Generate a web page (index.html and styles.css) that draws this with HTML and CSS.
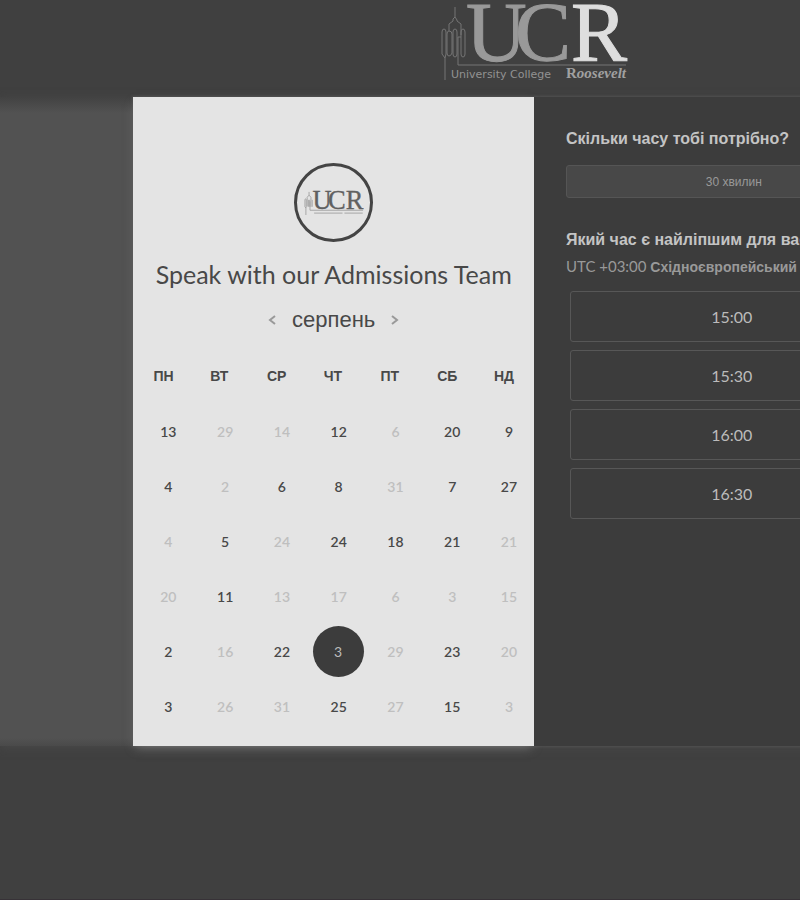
FILE: index.html
```html
<!DOCTYPE html>
<html lang="uk">
<head>
<meta charset="utf-8">
<title>Speak with our Admissions Team</title>
<link rel="stylesheet" href="styles.css">
</head>
<body>
<div class="page">
  <header class="top">
    <svg class="logo" viewBox="0 0 190 82" role="img" aria-label="UCR University College Roosevelt">
      <path class="tower" d="M6 79V57L3 53V31q0-3 2-3t2 3v22l-1 4M16 6v10l-2 2v2l-4 3v7M16 16l2 3v1l4 3v11M10 30q-2 0-2 3v19q0 3 2 3t3-3V33q0-3-3-3M14 53V31q0-3 2-3t2 3v22q0 3-2 3t-2-3M22 53V31q0-3 2-3t2 3v22q0 3-2 3t-2-3M19 36h3M19 36v28h168"/>
      <g class="letters">
        <text x="27" y="60" class="u">U</text>
        <text x="76" y="60" class="u">C</text>
        <text x="132" y="60" class="r">R</text>
      </g>
      <text x="12" y="77" class="name">University College</text>
      <text x="127" y="77" class="surname">R<tspan class="slant">oosevelt</tspan></text>
    </svg>
  </header>
  <main class="stage">
    <div class="card">
      <section class="calendar">
        <div class="avatar">
          <svg class="mini" viewBox="0 0 190 82" role="img" aria-label="UCR">
            <path class="tower" d="M6 79V57L3 53V31q0-3 2-3t2 3v22l-1 4M16 6v10l-6 7v29M16 16l6 7v30M14 53V31M18 53V31M26 53V31M19 36v28h168M32 73h90M128 73h58"/>
            <g class="letters">
              <text x="27" y="60">U</text>
              <text x="76" y="60">C</text>
              <text x="132" y="60">R</text>
            </g>
          </svg>
        </div>
        <h1>Speak with our Admissions Team</h1>
        <div class="month">
          <button type="button" aria-label="Попередній місяць"><svg viewBox="0 0 8 12"><path d="M7 2L2 6l5 4"/></svg></button>
          <h2>серпень</h2>
          <button type="button" aria-label="Наступний місяць"><svg viewBox="0 0 8 12"><path d="M1 2l5 4-5 4"/></svg></button>
        </div>
        <div class="days">
          <table>
            <colgroup><col span="6"><col class="last"></colgroup>
            <thead><tr><th>ПН</th><th>ВТ</th><th>СР</th><th>ЧТ</th><th>ПТ</th><th>СБ</th><th>НД</th></tr></thead>
            <tbody>
              <tr><td><button>13</button></td><td><button disabled>29</button></td><td><button disabled>14</button></td><td><button>12</button></td><td><button disabled>6</button></td><td><button>20</button></td><td><button>9</button></td></tr>
              <tr><td><button>4</button></td><td><button disabled>2</button></td><td><button>6</button></td><td><button>8</button></td><td><button disabled>31</button></td><td><button>7</button></td><td><button>27</button></td></tr>
              <tr><td><button disabled>4</button></td><td><button>5</button></td><td><button disabled>24</button></td><td><button>24</button></td><td><button>18</button></td><td><button>21</button></td><td><button disabled>21</button></td></tr>
              <tr><td><button disabled>20</button></td><td><button>11</button></td><td><button disabled>13</button></td><td><button disabled>17</button></td><td><button disabled>6</button></td><td><button disabled>3</button></td><td><button disabled>15</button></td></tr>
              <tr><td><button>2</button></td><td><button disabled>16</button></td><td><button>22</button></td><td><button class="selected" aria-pressed="true">3</button></td><td><button disabled>29</button></td><td><button>23</button></td><td><button disabled>20</button></td></tr>
              <tr><td><button>3</button></td><td><button disabled>26</button></td><td><button disabled>31</button></td><td><button>25</button></td><td><button disabled>27</button></td><td><button>15</button></td><td><button disabled>3</button></td></tr>
            </tbody>
          </table>
        </div>
      </section>
      <section class="times">
        <h3>Скільки часу тобі потрібно?</h3>
        <button type="button" class="duration">30 хвилин</button>
        <h3>Який час є найліпшим для вас?</h3>
        <p class="zone">UTC +03:00 <b>Східноєвропейський</b></p>
        <div class="slots">
          <button type="button">15:00</button>
          <button type="button">15:30</button>
          <button type="button">16:00</button>
          <button type="button">16:30</button>
        </div>
      </section>
    </div>
  </main>
</div>
</body>
</html>
```
FILE: styles.css
```css
* { box-sizing: border-box; }
html { overflow-x: hidden; background: #404040; }
body { margin: 0; min-height: 100vh; overflow-x: hidden; border-bottom: 1px solid #373237; font-family: Lato, "Liberation Sans", sans-serif; }
h1, h2, h3, p { margin: 0; font-weight: 400; }
button { font: inherit; color: inherit; background: none; border: 0; padding: 0; cursor: pointer; }
.page { min-width: 1067px; }

.top { height: 97px; padding-top: 1px; display: flex; justify-content: center; align-items: flex-start; }
.logo { width: 190px; height: 82px; }
.tower { fill: none; stroke: #757575; stroke-width: 1; }
.letters { font: 84px "Liberation Serif", serif; }
.u { fill: #999; stroke: #999; stroke-width: 1; }
.r { fill: #dedede; stroke: #dedede; stroke-width: 1; }
.name { font: 11px "DejaVu Sans", sans-serif; fill: #929292; }
.surname { font: bold 15px "Liberation Serif", serif; fill: #a0a0a0; }
.slant { font-style: italic; }

.stage { background: linear-gradient(#424242, #525252 16px, #525252 calc(100% - 8px), #4a4a4a); box-shadow: 0 2px 8px #484848; }
.card { width: 75%; margin: 0 auto; display: flex; box-shadow: 0 0 2px 1px #505050; }
.calendar { flex: 0 1 401px; padding: 66px 0 12px; background: #e4e4e4; color: #484848; box-shadow: 0 4px 10px -3px #777; }
.avatar { width: 79px; height: 79px; margin: 0 auto; border: 3px solid #444; border-radius: 50%; display: flex; align-items: center; justify-content: center; }
.mini { width: 60px; height: 26px; }
.mini .letters { fill: #606060; stroke: #606060; stroke-width: 1; }
.mini .tower { stroke: #a4a4a4; stroke-width: 3; }
.calendar h1 { margin-top: 16px; font-size: 25px; line-height: 32px; text-align: center; white-space: nowrap; }
.month { margin-top: 14px; display: flex; justify-content: center; align-items: center; gap: 16px; }
.month h2 { font: 22px/32px "Liberation Sans", sans-serif; }
.month button { width: 8px; height: 12px; display: flex; }
.month svg { width: 8px; height: 12px; fill: none; stroke: #999; stroke-width: 2; }
.days { padding: 12px 8px 0 18px; }
table { width: 100%; table-layout: fixed; border-collapse: collapse; }
.last { width: 34px; }
th { height: 56px; padding: 0 0 0 2px; text-align: left; font: bold 14px/16px "Liberation Sans", sans-serif; }
td { height: 55px; padding: 0; font-size: 14px; font-weight: 600; }
td button { display: block; width: 34px; height: 34px; text-align: center; }
td button:disabled { color: #bfbfbf; }
td .selected { width: 51px; height: 51px; margin: 0 -9px; border-radius: 50%; background: #3c3c3c; color: #bbb; font-weight: 400; }

.times { flex: 1 1 400px; padding: 32px 32px 0; background: #3c3c3c; color: #c4c4c4; }
.times h3 { font: bold 16px/20px "Liberation Sans", sans-serif; white-space: nowrap; }
.duration { display: block; width: 100%; height: 33px; margin: 16px 0 32px; border: 1px solid #555; border-radius: 3px; background: #484848; color: #999; font: 12px "Liberation Sans", sans-serif; }
.zone { margin-top: 6px; font-size: 15px; line-height: 20px; color: #999; }
.zone b { font: bold 14px/20px "Liberation Sans", sans-serif; }
.slots { margin: 14px 8px 0 4px; display: grid; gap: 8px; }
.slots button { height: 51px; border: 1px solid #575757; border-radius: 3px; color: #bbb; font-size: 16px; }
```
